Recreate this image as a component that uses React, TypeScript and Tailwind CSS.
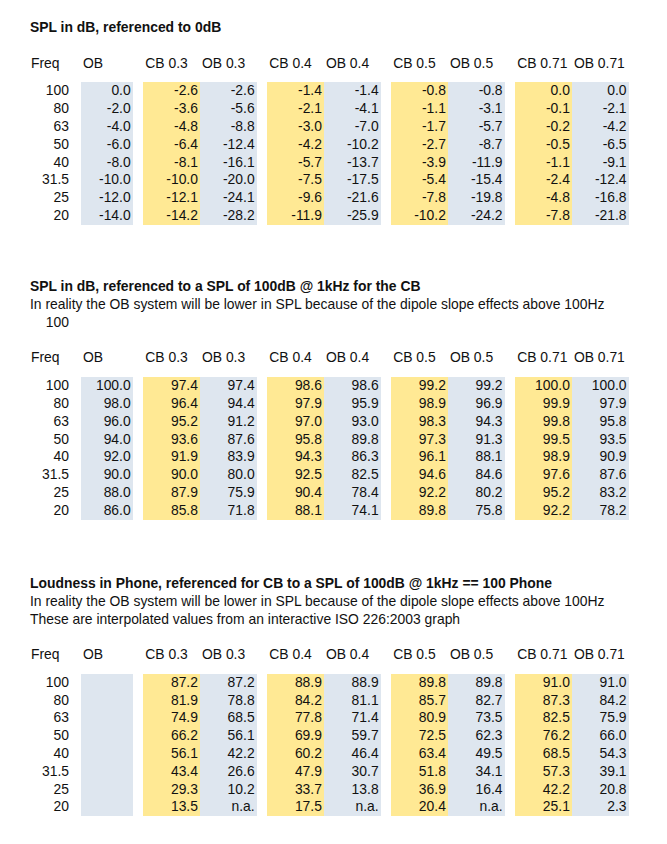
import React from "react";

type Col = { label: string; width: string; tone: "none" | "blue" | "yellow" | "gap" };

const COLS: Col[] = [
  { label: "Freq", width: "w-[41px]", tone: "none" },
  { label: "", width: "w-[10px]", tone: "gap" },
  { label: "OB", width: "w-[51.7px]", tone: "blue" },
  { label: "", width: "w-[10.6px]", tone: "gap" },
  { label: "CB 0.3", width: "w-[56.7px]", tone: "yellow" },
  { label: "OB 0.3", width: "w-[56.7px]", tone: "blue" },
  { label: "", width: "w-[10.6px]", tone: "gap" },
  { label: "CB 0.4", width: "w-[56.7px]", tone: "yellow" },
  { label: "OB 0.4", width: "w-[56.7px]", tone: "blue" },
  { label: "", width: "w-[10.6px]", tone: "gap" },
  { label: "CB 0.5", width: "w-[56.7px]", tone: "yellow" },
  { label: "OB 0.5", width: "w-[56.7px]", tone: "blue" },
  { label: "", width: "w-[10.6px]", tone: "gap" },
  { label: "CB 0.71", width: "w-[56.7px]", tone: "yellow" },
  { label: "OB 0.71", width: "w-[56.7px]", tone: "blue" },
];

const FREQS = ["100", "80", "63", "50", "40", "31.5", "25", "20"];

// one array per data column: OB, CB 0.3, OB 0.3, CB 0.4, OB 0.4, CB 0.5, OB 0.5, CB 0.71, OB 0.71
const relative = [
  ["0.0", "-2.0", "-4.0", "-6.0", "-8.0", "-10.0", "-12.0", "-14.0"],
  ["-2.6", "-3.6", "-4.8", "-6.4", "-8.1", "-10.0", "-12.1", "-14.2"],
  ["-2.6", "-5.6", "-8.8", "-12.4", "-16.1", "-20.0", "-24.1", "-28.2"],
  ["-1.4", "-2.1", "-3.0", "-4.2", "-5.7", "-7.5", "-9.6", "-11.9"],
  ["-1.4", "-4.1", "-7.0", "-10.2", "-13.7", "-17.5", "-21.6", "-25.9"],
  ["-0.8", "-1.1", "-1.7", "-2.7", "-3.9", "-5.4", "-7.8", "-10.2"],
  ["-0.8", "-3.1", "-5.7", "-8.7", "-11.9", "-15.4", "-19.8", "-24.2"],
  ["0.0", "-0.1", "-0.2", "-0.5", "-1.1", "-2.4", "-4.8", "-7.8"],
  ["0.0", "-2.1", "-4.2", "-6.5", "-9.1", "-12.4", "-16.8", "-21.8"],
];

const absolute = [
  ["100.0", "98.0", "96.0", "94.0", "92.0", "90.0", "88.0", "86.0"],
  ["97.4", "96.4", "95.2", "93.6", "91.9", "90.0", "87.9", "85.8"],
  ["97.4", "94.4", "91.2", "87.6", "83.9", "80.0", "75.9", "71.8"],
  ["98.6", "97.9", "97.0", "95.8", "94.3", "92.5", "90.4", "88.1"],
  ["98.6", "95.9", "93.0", "89.8", "86.3", "82.5", "78.4", "74.1"],
  ["99.2", "98.9", "98.3", "97.3", "96.1", "94.6", "92.2", "89.8"],
  ["99.2", "96.9", "94.3", "91.3", "88.1", "84.6", "80.2", "75.8"],
  ["100.0", "99.9", "99.8", "99.5", "98.9", "97.6", "95.2", "92.2"],
  ["100.0", "97.9", "95.8", "93.5", "90.9", "87.6", "83.2", "78.2"],
];

const loudness = [
  ["", "", "", "", "", "", "", ""],
  ["87.2", "81.9", "74.9", "66.2", "56.1", "43.4", "29.3", "13.5"],
  ["87.2", "78.8", "68.5", "56.1", "42.2", "26.6", "10.2", "n.a."],
  ["88.9", "84.2", "77.8", "69.9", "60.2", "47.9", "33.7", "17.5"],
  ["88.9", "81.1", "71.4", "59.7", "46.4", "30.7", "13.8", "n.a."],
  ["89.8", "85.7", "80.9", "72.5", "63.4", "51.8", "36.9", "20.4"],
  ["89.8", "82.7", "73.5", "62.3", "49.5", "34.1", "16.4", "n.a."],
  ["91.0", "87.3", "82.5", "76.2", "68.5", "57.3", "42.2", "25.1"],
  ["91.0", "84.2", "75.9", "66.0", "54.3", "39.1", "20.8", "2.3"],
];

const ROW = "h-[17.8px] leading-[17.8px] whitespace-nowrap";

const toneBg = (tone: Col["tone"]) =>
  tone === "blue" ? "bg-[#dee6ef]" : tone === "yellow" ? "bg-[#ffe994]" : "";

const DataTable = ({ values }: { values: string[][] }) => {
  return (
    <div>
      <div className={`flex ${ROW}`}>
        {COLS.map((c, i) => (
          <div key={i} className={`${c.width} shrink-0 ${i === 0 ? "pl-[1px]" : "pl-[2px]"}`}>
            {c.label}
          </div>
        ))}
      </div>
      <div className="h-[10px]" />
      {FREQS.map((f, r) => {
        let dataIdx = 0;
        return (
          <div key={f} className={`flex ${ROW}`}>
            {COLS.map((c, i) => {
              if (c.tone === "gap") return <div key={i} className={`${c.width} shrink-0`} />;
              const text = i === 0 ? f : values[dataIdx++][r];
              return (
                <div key={i} className={`${c.width} shrink-0 text-right pr-[2px] ${toneBg(c.tone)}`}>
                  {text}
                </div>
              );
            })}
          </div>
        );
      })}
    </div>
  );
};

const Section = ({ lines, values, extra }: { lines: string[]; values: string[][]; extra?: string }) => (
  <section>
    {lines.map((l, i) => (
      <div key={i} className={`${ROW} ${i === 0 ? "font-bold" : ""}`}>
        {l}
      </div>
    ))}
    {extra && (
      <div className={ROW}>
        <div className="w-[41px] text-right pr-[2px]">{extra}</div>
      </div>
    )}
    <div className="h-[17.8px]" />
    <DataTable values={values} />
  </section>
);

export default function App() {
  return (
    <div className="min-h-[844px] bg-white pl-[30px] pt-[19px] text-[13.9px] text-[#111] font-['Liberation_Sans',Arial,sans-serif]">
      <Section lines={["SPL in dB, referenced to 0dB"]} values={relative} />
      <div className="h-[53.4px]" />
      <Section
        lines={[
          "SPL in dB, referenced to a SPL of 100dB @ 1kHz for the CB",
          "In reality the OB system will be lower in SPL because of the dipole slope effects above 100Hz",
        ]}
        extra="100"
        values={absolute}
      />
      <div className="h-[55.4px]" />
      <Section
        lines={[
          "Loudness in Phone, referenced for CB to a SPL of 100dB @ 1kHz == 100 Phone",
          "In reality the OB system will be lower in SPL because of the dipole slope effects above 100Hz",
          "These are interpolated values from an interactive ISO 226:2003 graph",
        ]}
        values={loudness}
      />
    </div>
  );
}
